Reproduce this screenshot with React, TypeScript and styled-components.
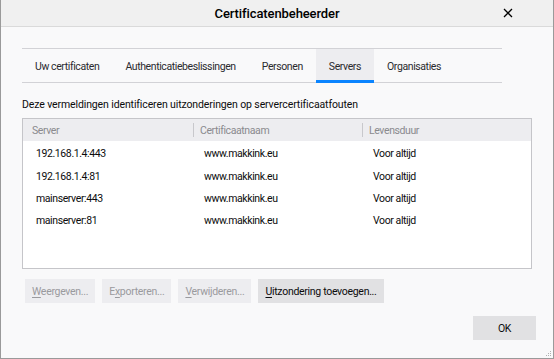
import React from "react";
import styled, {createGlobalStyle} from "styled-components";

const GlobalStyle = createGlobalStyle`
    html, body {
        margin: 0;
        padding: 0;
        background: #f9f9fa;
    }
    * {
        box-sizing: border-box;
    }
`;

const Window = styled.div`
    width: 554px;
    height: 359px;
    display: flex;
    flex-direction: column;
    background: #f9f9fa;
    border: 1px solid #9a9a9a;
    border-top: none;
    font-family: Roboto, 'Noto Sans', sans-serif;
    font-size: 10.5px;
    letter-spacing: -0.4px;
    color: #0c0c0d;
    position: relative;
`;

const TitleBar = styled.div`
    height: 27px;
    flex-shrink: 0;
    display: flex;
    align-items: center;
    justify-content: center;
    background: #f0f0f0;
    border-bottom: 1px solid #dadada;
    position: relative;
`;

const Title = styled.div`
    font-weight: 500;
    font-size: 13px;
    letter-spacing: -0.1px;
    color: #000;
`;

const CloseBtn = styled.div`
    position: absolute;
    right: 39px;
    top: 7px;
    width: 12px;
    height: 12px;
    display: flex;
    align-items: center;
    justify-content: center;
`;

const Body = styled.div`
    flex: 1;
    display: flex;
    flex-direction: column;
    padding: 21px 21px 0 21px;
`;

const TabBar = styled.div`
    display: flex;
    width: 480px;
    height: 35px;
    border-top: 1px solid #d2d2d6;
    border-bottom: 1px solid #d2d2d6;
`;

const Tab = styled.div<{ $active?: boolean }>`
    display: flex;
    align-items: center;
    white-space: nowrap;
    padding: 4px 13px 0;
    color: #2a2a2e;
    background: ${p => p.$active ? "#ededf0" : "transparent"};
    border-bottom: 3px solid ${p => p.$active ? "#0a84ff" : "transparent"};
    margin-bottom: -1px;
`;

const Description = styled.div`
    margin-top: 14px;
    height: 16px;
    line-height: 16px;
    letter-spacing: -0.12px;
`;

const Table = styled.div`
    margin-top: 5px;
    width: 510px;
    height: 151px;
    background: #fff;
    border: 1px solid #c5c5c9;
`;

const Row = styled.div<{ $head?: boolean }>`
    display: grid;
    grid-template-columns: 170px 169px 1fr;
    height: ${p => p.$head ? "22px" : "22.4px"};
    align-items: center;
    background: ${p => p.$head ? "#ededf0" : "transparent"};
    color: ${p => p.$head ? "#8a8a8e" : "#0c0c0d"};
    margin-bottom: ${p => p.$head ? "2px" : "0"};
`;

const Cell = styled.div<{ $head?: boolean; $first?: boolean }>`
    border-left: ${p => p.$head && !p.$first ? "1px solid #c8c8cc" : "1px solid transparent"};
    height: 14px;
    line-height: ${p => p.$head ? "15px" : "14px"};
    white-space: nowrap;
    padding-left: ${p => p.$head ? (p.$first ? "8px" : "6px") : (p.$first ? "12px" : "10px")};
`;

const ButtonRow = styled.div`
    display: flex;
    gap: 7px;
    margin-top: 10px;
    padding-left: 3px;
`;

const Button = styled.div<{ $disabled?: boolean }>`
    height: 24px;
    padding: 0 7px;
    display: flex;
    align-items: center;
    letter-spacing: -0.3px;
    background: ${p => p.$disabled ? "#ededf0" : "#e1e1e3"};
    color: ${p => p.$disabled ? "#9a9a9e" : "#0c0c0d"};

    u {
        text-decoration: underline;
        text-underline-offset: 2px;
    }
`;

const Footer = styled.div`
    display: flex;
    justify-content: flex-end;
    margin-top: 13px;
    margin-right: -4px;
`;

const OkButton = styled(Button)`
    width: 63px;
    justify-content: center;
`;

const Grip = styled.div`
    position: absolute;
    right: 1px;
    bottom: 1px;
    line-height: 0;
`;

const rows = [
    ["192.168.1.4:443", "www.makkink.eu", "Voor altijd"],
    ["192.168.1.4:81", "www.makkink.eu", "Voor altijd"],
    ["mainserver:443", "www.makkink.eu", "Voor altijd"],
    ["mainserver:81", "www.makkink.eu", "Voor altijd"],
];

const tabs = ["Uw certificaten", "Authenticatiebeslissingen", "Personen", "Servers", "Organisaties"];

export default function App() {
    return (
        <>
            <GlobalStyle/>
            <Window>
                <TitleBar>
                    <Title>Certificatenbeheerder</Title>
                    <CloseBtn>
                        <svg width="10" height="10" viewBox="0 0 10 10">
                            <path d="M1 1 L9 9 M9 1 L1 9" stroke="#000" strokeWidth="1.3"/>
                        </svg>
                    </CloseBtn>
                </TitleBar>
                <Body>
                    <TabBar>
                        {tabs.map(t => <Tab key={t} $active={t === "Servers"}>{t}</Tab>)}
                    </TabBar>
                    <Description>Deze vermeldingen identificeren uitzonderingen op servercertificaatfouten</Description>
                    <Table>
                        <Row $head>
                            <Cell $head $first>Server</Cell>
                            <Cell $head>Certificaatnaam</Cell>
                            <Cell $head>Levensduur</Cell>
                        </Row>
                        {rows.map(r => (
                            <Row key={r[0]}>
                                <Cell $first>{r[0]}</Cell>
                                <Cell>{r[1]}</Cell>
                                <Cell>{r[2]}</Cell>
                            </Row>
                        ))}
                    </Table>
                    <ButtonRow>
                        <Button $disabled><span><u>W</u>eergeven...</span></Button>
                        <Button $disabled><span>E<u>x</u>porteren...</span></Button>
                        <Button $disabled><span><u>V</u>erwijderen...</span></Button>
                        <Button><span><u>U</u>itzondering toevoegen...</span></Button>
                    </ButtonRow>
                    <Footer>
                        <OkButton>OK</OkButton>
                    </Footer>
                </Body>
                <Grip>
                    <svg width="8" height="8" viewBox="0 0 8 8">
                        <rect x="6" y="2" width="1" height="1" fill="#b0b0b0"/>
                        <rect x="4" y="4" width="1" height="1" fill="#b0b0b0"/>
                        <rect x="6" y="4" width="1" height="1" fill="#b0b0b0"/>
                        <rect x="2" y="6" width="1" height="1" fill="#b0b0b0"/>
                        <rect x="4" y="6" width="1" height="1" fill="#b0b0b0"/>
                        <rect x="6" y="6" width="1" height="1" fill="#b0b0b0"/>
                    </svg>
                </Grip>
            </Window>
        </>
    );
}
